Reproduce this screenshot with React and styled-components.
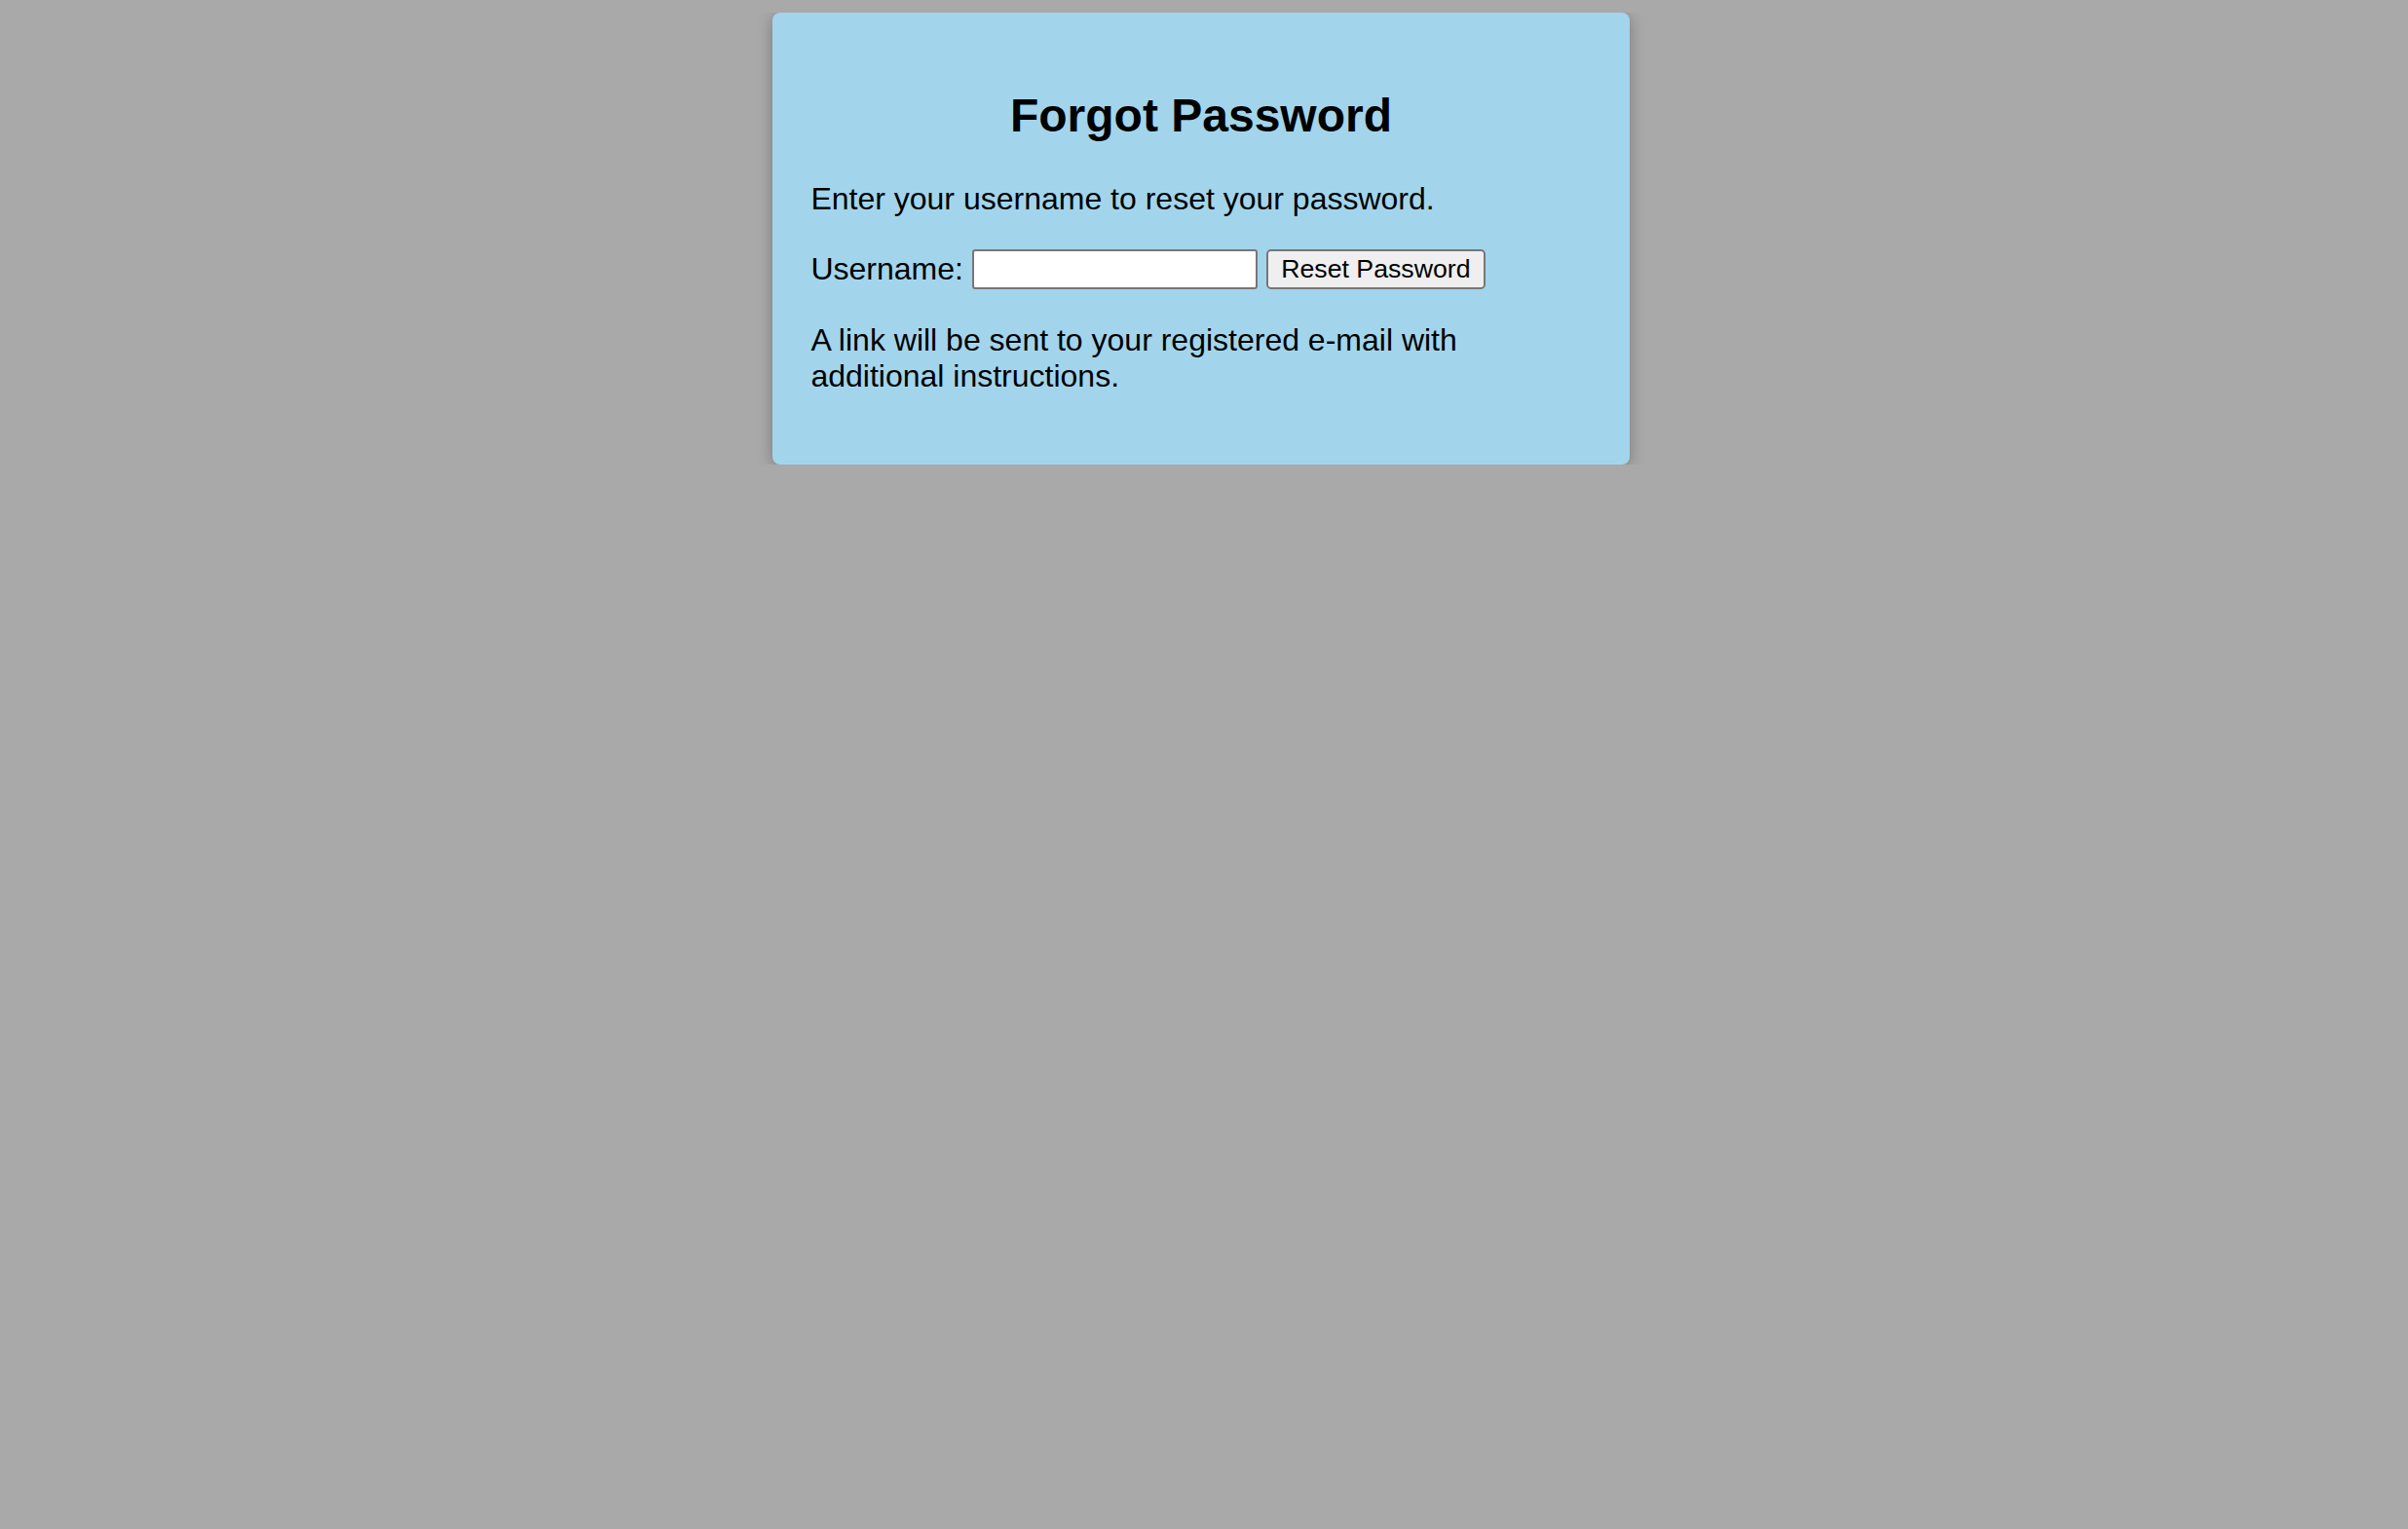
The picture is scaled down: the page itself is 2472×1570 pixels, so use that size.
import React from 'react'
import styled, { createGlobalStyle } from 'styled-components';

const GlobalStyle = createGlobalStyle`
  html, body {
    background-color: #a9a9a9;
  }

  body {
    margin: 12.6px 18.6px 12.6px 12.6px;
    font-family: "Liberation Sans", Arial, Helvetica, sans-serif;
    font-size: 32px;
    color: #000;
  }
`;

const Card = styled.div`
  width: 880px;
  box-sizing: border-box;
  margin: 0 auto;
  padding: 39.4px 39.4px 40.6px;
  background-color: #a2d5ec;
  border-radius: 8px;
  box-shadow: 0 3px 16px rgba(0, 0, 0, 0.28);
`;

const Title = styled.h2`
  margin: 39.3px 0;
  font-size: 48px;
  font-weight: bold;
  text-align: center;
`;

const Text = styled.p`
  margin: ${(p) => (p.$last ? '31px 0 31.5px' : '30px 0')};
`;

const Form = styled.form`
  display: flex;
  align-items: center;
  gap: 9px;
  height: 46.8px;
  margin: 30.7px 0;
`;

const Label = styled.label``;

const Input = styled.input`
  box-sizing: border-box;
  width: 293px;
  height: 41.6px;
  padding: 1.6px 3.2px;
  border: 2px solid #767676;
  border-radius: 3.2px;
  background: #fff;
  font-family: "Liberation Sans", Arial, sans-serif;
  font-size: 26.7px;
`;

const Button = styled.button`
  box-sizing: border-box;
  width: 225px;
  height: 41.6px;
  padding: 0;
  border: 2px solid #767676;
  border-radius: 4.7px;
  background-color: #efefef;
  color: #000;
  font-family: "Liberation Sans", Arial, sans-serif;
  font-size: 26.7px;
  line-height: 1;
`;

const App = () => {
  return (
    <>
      <GlobalStyle />
      <Card>
        <Title>Forgot Password</Title>
        <Text>Enter your username to reset your password.</Text>
        <Form onSubmit={(e) => e.preventDefault()}>
          <Label htmlFor="username">Username:</Label>
          <Input id="username" type="text" />
          <Button type="submit">Reset Password</Button>
        </Form>
        <Text $last>A link will be sent to your registered e-mail with additional instructions.</Text>
      </Card>
    </>
  )
}

export default App
